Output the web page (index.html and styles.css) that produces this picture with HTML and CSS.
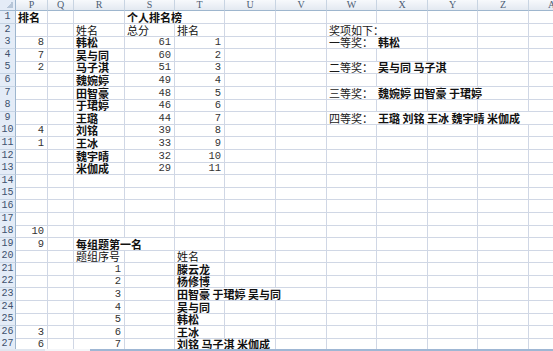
FILE: index.html
```html
<!DOCTYPE html>
<html lang="zh">
<head>
<meta charset="utf-8">
<title>排名</title>
<link rel="stylesheet" href="styles.css">
</head>
<body>
<div class="sheet">
  <div class="r top">
    <span class="corner"></span><span>P</span><span>Q</span><span>R</span><span>S</span><span>T</span><span>U</span><span>V</span><span>W</span><span>X</span><span>Y</span><span>Z</span><span class="cut">A</span>
  </div>
  <div class="r"><span class="h">1</span><span class="b">排名</span><span></span><span></span><span class="b s2">个人排名榜</span><span></span><span></span><span></span><span></span><span></span><span></span><span></span></div>
  <div class="r"><span class="h">2</span><span></span><span></span><span>姓名</span><span>总分</span><span>排名</span><span></span><span></span><span class="s2 aw">奖项如下：</span><span></span><span></span><span></span></div>
  <div class="r"><span class="h">3</span><span class="n">8</span><span></span><span class="b">韩松</span><span class="n">61</span><span class="n">1</span><span></span><span></span><span class="s2 aw">一等奖：  <strong>韩松</strong></span><span></span><span></span><span></span></div>
  <div class="r"><span class="h">4</span><span class="n">7</span><span></span><span class="b">吴与同</span><span class="n">60</span><span class="n">2</span><span></span><span></span><span></span><span></span><span></span><span></span><span></span></div>
  <div class="r"><span class="h">5</span><span class="n">2</span><span></span><span class="b">马子淇</span><span class="n">51</span><span class="n">3</span><span></span><span></span><span class="s3 aw">二等奖：  <strong>吴与同 马子淇</strong></span><span></span><span></span></div>
  <div class="r"><span class="h">6</span><span></span><span></span><span class="b">魏婉婷</span><span class="n">49</span><span class="n">4</span><span></span><span></span><span></span><span></span><span></span><span></span><span></span></div>
  <div class="r"><span class="h">7</span><span></span><span></span><span class="b">田智豪</span><span class="n">48</span><span class="n">5</span><span></span><span></span><span class="s4 aw">三等奖：  <strong>魏婉婷 田智豪 于珺婷</strong></span><span></span></div>
  <div class="r"><span class="h">8</span><span></span><span></span><span class="b">于珺婷</span><span class="n">46</span><span class="n">6</span><span></span><span></span><span></span><span></span><span></span><span></span><span></span></div>
  <div class="r"><span class="h">9</span><span></span><span></span><span class="b">王璐</span><span class="n">44</span><span class="n">7</span><span></span><span></span><span class="s5 aw">四等奖：  <strong>王璐 刘铭 王冰 魏宇晴 米伽成</strong></span></div>
  <div class="r"><span class="h">10</span><span class="n">4</span><span></span><span class="b">刘铭</span><span class="n">39</span><span class="n">8</span><span></span><span></span><span></span><span></span><span></span><span></span><span></span></div>
  <div class="r"><span class="h">11</span><span class="n">1</span><span></span><span class="b">王冰</span><span class="n">33</span><span class="n">9</span><span></span><span></span><span></span><span></span><span></span><span></span><span></span></div>
  <div class="r"><span class="h">12</span><span></span><span></span><span class="b">魏宇晴</span><span class="n">32</span><span class="n">10</span><span></span><span></span><span></span><span></span><span></span><span></span><span></span></div>
  <div class="r"><span class="h">13</span><span></span><span></span><span class="b">米伽成</span><span class="n">29</span><span class="n">11</span><span></span><span></span><span></span><span></span><span></span><span></span><span></span></div>
  <div class="r"><span class="h">14</span><span></span><span></span><span></span><span></span><span></span><span></span><span></span><span></span><span></span><span></span><span></span><span></span></div>
  <div class="r"><span class="h">15</span><span></span><span></span><span></span><span></span><span></span><span></span><span></span><span></span><span></span><span></span><span></span><span></span></div>
  <div class="r"><span class="h">16</span><span></span><span></span><span></span><span></span><span></span><span></span><span></span><span></span><span></span><span></span><span></span><span></span></div>
  <div class="r"><span class="h">17</span><span></span><span></span><span></span><span></span><span></span><span></span><span></span><span></span><span></span><span></span><span></span><span></span></div>
  <div class="r"><span class="h">18</span><span class="n">10</span><span></span><span></span><span></span><span></span><span></span><span></span><span></span><span></span><span></span><span></span><span></span></div>
  <div class="r"><span class="h">19</span><span class="n">9</span><span></span><span class="b s2">每组题第一名</span><span></span><span></span><span></span><span></span><span></span><span></span><span></span><span></span></div>
  <div class="r"><span class="h">20</span><span></span><span></span><span>题组序号</span><span></span><span>姓名</span><span></span><span></span><span></span><span></span><span></span><span></span><span></span></div>
  <div class="r"><span class="h">21</span><span></span><span></span><span class="n">1</span><span></span><span class="b">滕云龙</span><span></span><span></span><span></span><span></span><span></span><span></span><span></span></div>
  <div class="r"><span class="h">22</span><span></span><span></span><span class="n">2</span><span></span><span class="b">杨修博</span><span></span><span></span><span></span><span></span><span></span><span></span><span></span></div>
  <div class="r"><span class="h">23</span><span></span><span></span><span class="n">3</span><span></span><span class="b s3">田智豪 于珺婷 吴与同</span><span></span><span></span><span></span><span></span><span></span></div>
  <div class="r"><span class="h">24</span><span></span><span></span><span class="n">4</span><span></span><span class="b">吴与同</span><span></span><span></span><span></span><span></span><span></span><span></span><span></span></div>
  <div class="r"><span class="h">25</span><span></span><span></span><span class="n">5</span><span></span><span class="b">韩松</span><span></span><span></span><span></span><span></span><span></span><span></span><span></span></div>
  <div class="r"><span class="h">26</span><span class="n">3</span><span></span><span class="n">6</span><span></span><span class="b">王冰</span><span></span><span></span><span></span><span></span><span></span><span></span><span></span></div>
  <div class="r"><span class="h">27</span><span class="n">6</span><span></span><span class="n">7</span><span></span><span class="b s2">刘铭 马子淇 米伽成</span><span></span><span></span><span></span><span></span><span></span><span></span></div>
</div>
<div class="tabs"><span class="t1"></span><span class="t2"></span><span class="t3"></span></div>
</body>
</html>
```

FILE: styles.css
```css
html, body {
  margin: 0;
  padding: 0;
  background: #ffffff;
}
body {
  width: 553px;
  height: 351px;
  overflow: hidden;
  font-family: "Noto Sans CJK SC", "Liberation Sans", sans-serif;
  font-size: 11px;
  color: #111111;
}
.sheet {
  height: 349px;
  overflow: hidden;
}
.r {
  display: grid;
  grid-template-columns: 16px 32px 26px 51px 50px 50px 51px 51px 50px 51px 50px 51px 40px;
  height: 12.6px;
}
.r > span {
  box-sizing: border-box;
  border-right: 1px solid #d0d7e5;
  border-bottom: 1px solid #d0d7e5;
  overflow: visible;
  white-space: pre;
  line-height: 12px;
  padding: 0 2px;
  min-width: 0;
}
.r > .h {
  background: #e4ecf7;
  color: #3e526e;
  border-right-color: #9eb6ce;
  border-bottom-color: #c6d4e4;
  font-family: "Liberation Mono", monospace;
  font-size: 10px;
  padding: 0;
  text-align: center;
}
.top {
  height: 11px;
}
.top > span {
  background: linear-gradient(#f7f9fc, #e3e9f1);
  border-right-color: #c8d4e2;
  border-bottom-color: #9eb6ce;
  color: #4d5d74;
  font-family: "Liberation Serif", serif;
  font-size: 10px;
  line-height: 10px;
  text-align: center;
  padding: 0;
}
.top > .corner {
  background:
    linear-gradient(to bottom right, transparent 50%, #b7c6d8 50%) no-repeat right 2px bottom 2px / 7px 7px,
    #e4ecf7;
  border-right-color: #9eb6ce;
}
.top > .cut {
  text-align: left;
  padding-left: 19px;
}
.b {
  font-weight: bold;
}
.n {
  text-align: right;
  font-family: "Liberation Mono", monospace;
  font-size: 10.5px;
  color: #333333;
  padding-right: 3px !important;
}
.aw {
  color: #1a1a1a;
}
.aw strong {
  font-weight: bold;
  color: #111111;
}
.s2 { grid-column: span 2; }
.s3 { grid-column: span 3; }
.s4 { grid-column: span 4; }
.s5 { grid-column: span 5; }
.tabs {
  display: flex;
  height: 2px;
}
.t1 {
  width: 45px;
  background: #dfe6ef;
}
.t2 {
  width: 45px;
  background: #f4f6f9;
}
.t3 {
  flex: 1;
  background: #9fb7d4;
}
```
